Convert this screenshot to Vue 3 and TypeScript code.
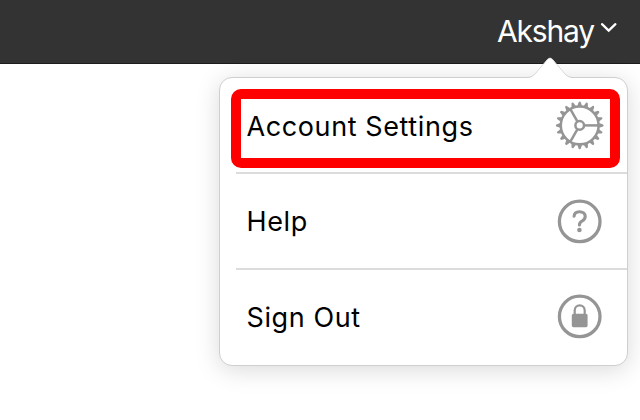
<script setup lang="ts">
interface MenuItem {
  id: 'settings' | 'help' | 'signout'
  label: string
}

const userName: string = 'Akshay'

const items: MenuItem[] = [
  { id: 'settings', label: 'Account Settings' },
  { id: 'help', label: 'Help' },
  { id: 'signout', label: 'Sign Out' },
]

const teeth: number[] = Array.from({ length: 20 }, (_, i) => i * 18)
const spokes: number[] = [0, 120, 240]
</script>

<template>
  <div class="page">
    <header class="topbar">
      <button class="account" type="button">
        <span class="name">{{ userName }}</span>
        <svg class="chevron" width="18" height="12" viewBox="0 0 18 12">
          <path d="M2 2.2 L8.7 8.6 L15.4 2.2" />
        </svg>
      </button>
    </header>

    <nav class="menu">
      <svg class="arrow" width="48" height="24" viewBox="0 0 48 24">
        <path class="edge" d="M1 21.5 C5 21.5 7 20 9.5 17.5 L21.5 3.4 Q24 .6 26.5 3.4 L38.5 17.5 C41 20 43 21.5 47 21.5" />
        <path class="fill" d="M1 24 V22 C5 22 7 20.5 9.5 18 L21.5 3.6 Q24 .8 26.5 3.6 L38.5 18 C41 20.5 43 22 47 22 V24 Z" />
      </svg>
      <ul class="list">
        <li v-for="item in items" :key="item.id" class="item" :class="item.id">
          <span class="label">{{ item.label }}</span>
          <svg class="icon" width="50" height="50" viewBox="-24.7 -25.4 50 50">
            <template v-if="item.id === 'settings'">
              <path
                v-for="a in teeth"
                :key="a"
                class="tooth"
                d="M19.5 -2.3 L23.4 -1 Q24.4 0 23.4 1 L19.5 2.3 Z"
                :transform="`rotate(${a})`"
              />
              <circle class="line" r="18.9" stroke-width="2.5" />
              <circle class="line" r="4.3" stroke-width="2.5" />
              <path
                v-for="s in spokes"
                :key="s"
                class="line"
                d="M5 0 H19"
                stroke-width="2.5"
                :transform="`rotate(${s})`"
              />
            </template>
            <template v-else>
              <circle class="line" r="20.3" stroke-width="3.3" />
              <template v-if="item.id === 'help'">
                <path
                  class="line"
                  d="M-5.6 -5.1 C-5.5 -8 -3.3 -9.7 -.2 -9.7 C3.1 -9.7 5.5 -7.9 5.5 -5 C5.5 -2.8 4.3 -1.6 2.4 -.4 C.4 .8 -.3 1.7 -.3 3.6"
                  stroke-width="3.1"
                  stroke-linecap="round"
                />
                <circle class="solid" cx="-.3" cy="8.6" r="2.3" />
              </template>
              <template v-else>
                <rect class="solid" x="-7.9" y="-2.7" width="15.8" height="13.6" rx="1.7" />
                <path class="line" d="M-5 -2 V-6 A5 5 0 0 1 5 -6 V-2" stroke-width="2.2" />
              </template>
            </template>
          </svg>
        </li>
      </ul>
      <div class="highlight"></div>
    </nav>
  </div>
</template>

<style>
body {
  margin: 0;
  background: #fff;
}
</style>

<style scoped>
.page {
  position: relative;
  width: 640px;
  height: 420px;
  overflow: hidden;
  background: #fff;
  font-family: Inter, "Liberation Sans", sans-serif;
}

.topbar {
  display: flex;
  justify-content: flex-end;
  box-sizing: border-box;
  height: 64px;
  padding-right: 22px;
  background: #333;
  border-bottom: 1px solid #1c1c1c;
}

.account {
  display: flex;
  align-items: center;
  gap: 6px;
  height: 61px;
  padding: 0;
  border: 0;
  background: none;
  color: #fff;
  font: inherit;
}

.name {
  font-size: 30px;
  font-weight: 400;
  letter-spacing: -1.15px;
}

.chevron {
  margin-bottom: 5px;
}

.chevron path {
  fill: none;
  stroke: #fff;
  stroke-width: 2.3;
  stroke-linecap: round;
}

.menu {
  position: absolute;
  top: 77px;
  left: 219px;
  box-sizing: border-box;
  width: 409px;
  height: 289px;
  background: #fff;
  border: 1px solid #cfcfcf;
  border-radius: 13px;
  box-shadow: 0 4px 24px rgba(0, 0, 0, 0.15);
}

.arrow {
  position: absolute;
  top: -22px;
  left: 306px;
}

.edge {
  fill: none;
  stroke: #d0d0d0;
  stroke-width: 1;
}

.fill {
  fill: #fff;
}

.list {
  margin: 0;
  padding: 0 0 0 16px;
  list-style: none;
}

.item {
  display: flex;
  align-items: center;
  justify-content: space-between;
  box-sizing: border-box;
  height: 96px;
  padding: 0 22px 0 10.5px;
  border-bottom: 2px solid #dcdcdc;
}

.signout {
  height: 91px;
  border-bottom: 0;
}

.label {
  padding-top: 2px;
  color: #000;
  font-size: 27px;
  line-height: 36px;
  letter-spacing: 0.6px;
}

.settings .label {
  padding-top: 4px;
}

.signout .label {
  padding-top: 4px;
}

.line {
  fill: none;
  stroke: #959595;
}

.solid,
.tooth {
  fill: #959595;
}

.highlight {
  position: absolute;
  top: 11px;
  left: 11px;
  box-sizing: border-box;
  width: 389px;
  height: 79px;
  border: 10px solid #f00;
  border-radius: 10px;
}
</style>
